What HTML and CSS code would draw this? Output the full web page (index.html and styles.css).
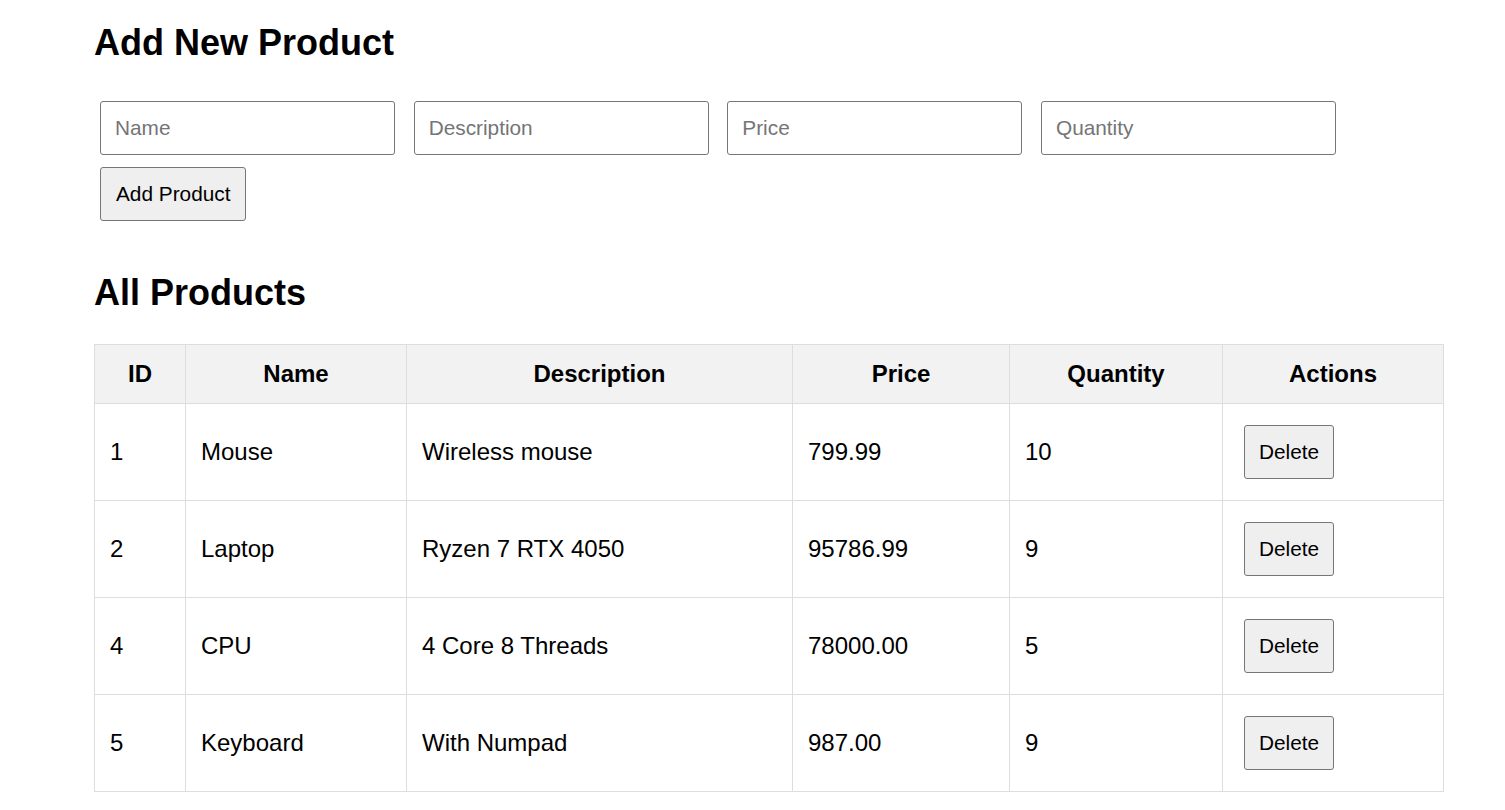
FILE: index.html
```html
<!DOCTYPE html>
<html lang="en">
<head>
<meta charset="utf-8">
<title>Products</title>
<link rel="stylesheet" href="styles.css">
</head>
<body>
<main class="page">
  <section class="section">
    <h2 class="title">Add New Product</h2>
    <form class="product-form">
      <input class="field" type="text" placeholder="Name">
      <input class="field" type="text" placeholder="Description">
      <input class="field" type="text" placeholder="Price">
      <input class="field" type="text" placeholder="Quantity">
      <button class="btn btn-add" type="button">Add Product</button>
    </form>
  </section>
  <section class="section section-list">
    <h2 class="title">All Products</h2>
    <table class="products">
      <colgroup>
        <col class="c-id">
        <col class="c-name">
        <col class="c-desc">
        <col class="c-price">
        <col class="c-qty">
        <col class="c-act">
      </colgroup>
      <thead>
        <tr><th>ID</th><th>Name</th><th>Description</th><th>Price</th><th>Quantity</th><th>Actions</th></tr>
      </thead>
      <tbody>
        <tr><td>1</td><td>Mouse</td><td>Wireless mouse</td><td>799.99</td><td>10</td><td><button class="btn btn-del" type="button">Delete</button></td></tr>
        <tr><td>2</td><td>Laptop</td><td>Ryzen 7 RTX 4050</td><td>95786.99</td><td>9</td><td><button class="btn btn-del" type="button">Delete</button></td></tr>
        <tr><td>4</td><td>CPU</td><td>4 Core 8 Threads</td><td>78000.00</td><td>5</td><td><button class="btn btn-del" type="button">Delete</button></td></tr>
        <tr><td>5</td><td>Keyboard</td><td>With Numpad</td><td>987.00</td><td>9</td><td><button class="btn btn-del" type="button">Delete</button></td></tr>
      </tbody>
    </table>
  </section>
</main>
</body>
</html>
```

FILE: styles.css
```css
html, body {
  margin: 0;
  padding: 0;
  background: #ffffff;
}

body {
  font-family: "Liberation Sans", Arial, sans-serif;
  font-size: 24px;
  color: #000000;
}

.page {
  width: 1350px;
  padding: 22px 0 0 94px;
}

.title {
  font-size: 36px;
  font-weight: bold;
  line-height: 41px;
  margin: 0 0 32px;
}

.section-list {
  margin-top: 45px;
}

.section-list .title {
  margin-bottom: 31px;
}

.product-form {
  display: flex;
  flex-wrap: wrap;
  column-gap: 6.67px;
  margin: 0;
}

.field {
  box-sizing: border-box;
  width: 295px;
  height: 54px;
  margin: 6px;
  padding: 0 14px;
  font-family: "Liberation Sans", Arial, sans-serif;
  font-size: 20.8px;
  color: #000000;
  border: 1px solid #767676;
  border-radius: 3px;
  background: #ffffff;
}

.field::placeholder {
  color: #757575;
}

.btn {
  box-sizing: border-box;
  height: 54px;
  margin: 6px;
  padding: 0 14px;
  font-family: "Liberation Sans", Arial, sans-serif;
  font-size: 20.8px;
  color: #000000;
  background: #efefef;
  border: 1px solid #767676;
  border-radius: 3px;
}

.btn-add {
  padding: 0 15px;
}

.btn-del {
  display: block;
}

.products {
  width: 1350px;
  border-collapse: collapse;
  table-layout: fixed;
}

.c-id { width: 91px; }
.c-name { width: 221px; }
.c-desc { width: 386px; }
.c-price { width: 217px; }
.c-qty { width: 213px; }

.products th,
.products td {
  border: 1px solid #dddddd;
  padding: 15px;
  line-height: 28px;
  vertical-align: middle;
}

.products th {
  background: #f2f2f2;
  font-weight: bold;
  text-align: center;
}

.products td {
  text-align: left;
}
```
